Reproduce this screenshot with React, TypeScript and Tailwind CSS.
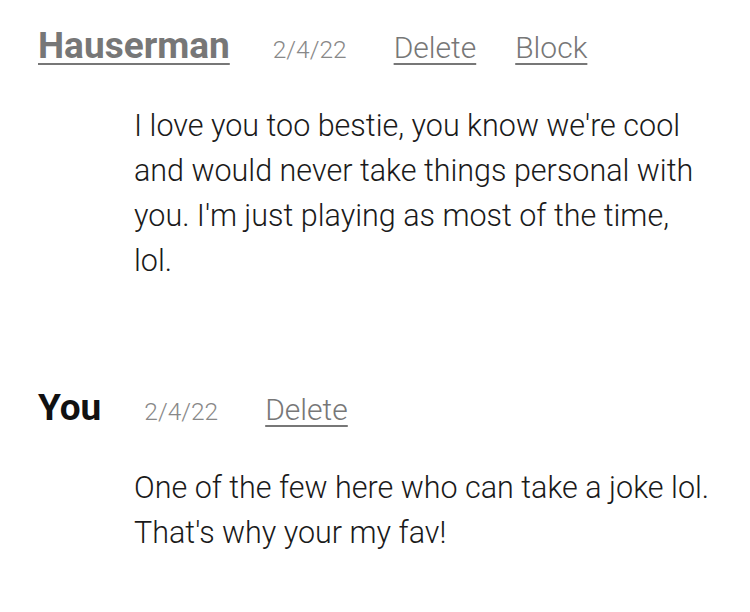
export default function App() {
    const messages = [
        {
            name: 'Hauserman',
            mine: false,
            date: '2/4/22',
            text: "I love you too bestie, you know we're cool and would never take things personal with you. I'm just playing as most of the time, lol.",
        },
        {
            name: 'You',
            mine: true,
            date: '2/4/22',
            text: "One of the few here who can take a joke lol. That's why your my fav!",
        },
    ];

    return (
        <div className="min-h-screen bg-white pt-[27px]" style={{ fontFamily: 'Roboto, sans-serif' }}>
            {messages.map((m, i) => (
                <div key={i} className={i === 0 ? 'mb-[106px]' : ''}>
                    <div className="flex items-baseline pl-[38px] leading-none">
                        {m.mine ? (
                            <span className="text-[37px] font-bold text-[#111]">{m.name}</span>
                        ) : (
                            <a className="text-[37px] font-bold text-[#777] underline decoration-2 underline-offset-[5px]">{m.name}</a>
                        )}
                        <span className="ml-[43px] text-[24.5px] font-light text-[#888]">{m.date}</span>
                        <a className="ml-[47px] text-[30px] font-light text-[#777] underline decoration-[1.5px] underline-offset-[5px]">Delete</a>
                        {!m.mine && (
                            <a className="ml-[39px] text-[30px] font-light text-[#777] underline decoration-[1.5px] underline-offset-[5px]">Block</a>
                        )}
                    </div>
                    <p className="mt-[39px] w-[580px] ml-[134px] text-[30.5px] font-light leading-[45px] text-[#1a1a1a]">
                        {m.text}
                    </p>
                </div>
            ))}
        </div>
    );
}
